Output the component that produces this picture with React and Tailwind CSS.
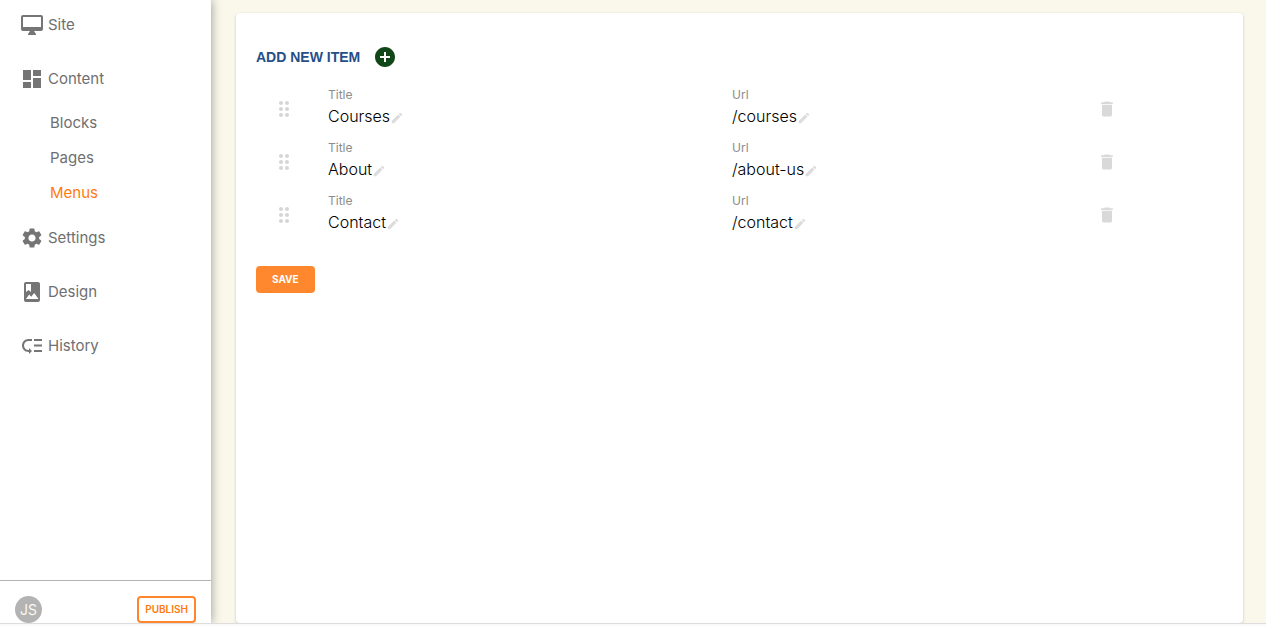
import {
  MdAddCircle,
  MdDashboard,
  MdDelete,
  MdDragIndicator,
  MdEdit,
  MdLowPriority,
  MdSettings,
} from "react-icons/md";

function DesktopIcon(props) {
  return (
    <svg viewBox="0 0 24 24" fill="currentColor" {...props}>
      <path d="M21 2H3c-1.1 0-2 .9-2 2v12c0 1.1.9 2 2 2h7l-2 3v1h8v-1l-2-3h7c1.1 0 2-.9 2-2V4c0-1.1-.9-2-2-2zm0 12H3V4h18v10z" />
    </svg>
  );
}

function AlbumIcon(props) {
  return (
    <svg viewBox="0 0 24 24" fill="currentColor" {...props}>
      <path d="M18 2H6c-1.1 0-2 .9-2 2v16c0 1.1.9 2 2 2h12c1.1 0 2-.9 2-2V4c0-1.1-.9-2-2-2zM6 4h5v8l-2.5-2L6 12V4zm0 15l3.2-4.6 2 2.4 3-3.8L18.500 19H6z" />
    </svg>
  );
}

const navigation = [
  { label: "Site", Icon: DesktopIcon },
  {
    label: "Content",
    Icon: MdDashboard,
    children: ["Blocks", "Pages", "Menus"],
  },
  { label: "Settings", Icon: MdSettings },
  { label: "Design", Icon: AlbumIcon },
  { label: "History", Icon: MdLowPriority },
];

const menuItems = [
  { title: "Courses", url: "/courses" },
  { title: "About", url: "/about-us" },
  { title: "Contact", url: "/contact" },
];

function Sidebar({ current }) {
  return (
    <aside className="relative flex w-[211px] shrink-0 flex-col bg-white shadow-[0_0_10px_rgba(0,0,0,0.4)]">
      <nav aria-label="Main" className="flex-1 text-[15px] leading-6 font-normal">
        <ul className="flex flex-col gap-1">
          {navigation.map(({ label, Icon, children }) => (
            <li key={label}>
              <a href="#" className="flex h-[50px] items-center gap-1 pl-5 text-[#6f6f6f]">
                <Icon className="size-6 text-[#757575]" aria-hidden="true" />
                {label}
              </a>
              {children && (
                <ul className="mt-[5px] mb-[2px] flex flex-col gap-[7px]">
                  {children.map((child) => (
                    <li key={child}>
                      <a
                        href="#"
                        aria-current={child === current ? "page" : undefined}
                        className="flex h-7 items-center pl-[50px] text-[#6f6f6f] aria-[current=page]:text-[#ff7a10]"
                      >
                        {child}
                      </a>
                    </li>
                  ))}
                </ul>
              )}
            </li>
          ))}
        </ul>
      </nav>
      <div className="flex items-center justify-between border-t border-[#b3b3b3] pt-[15px] pr-[15px] pl-[15px]">
        <span className="flex size-[27px] items-center justify-center rounded-full bg-[#b3b3b3] text-sm font-normal text-[#fafaf0]">
          JS
        </span>
        <button
          type="button"
          className="h-[27px] rounded border-2 border-[#ff862d] px-[6px] text-[10px] font-semibold text-[#ff7a10]"
        >
          PUBLISH
        </button>
      </div>
    </aside>
  );
}

function EditableField({ label, value }) {
  return (
    <div>
      <div className="text-xs leading-[18px] font-normal text-[#8c8c8c]">{label}</div>
      <div className="flex items-center text-base leading-[25px] text-black">
        {value}
        <button type="button" aria-label={`Edit ${label} ${value}`} className="mt-[2px]">
          <MdEdit className="size-[14px] text-[#dcdcdc]" />
        </button>
      </div>
    </div>
  );
}

export default function App() {
  return (
    <div className="flex min-h-screen flex-col bg-[#fafafa] font-['Inter',sans-serif] text-base font-light">
      <div className="flex flex-1 overflow-hidden border-b border-[#dddddd] bg-[#faf8eb]">
        <Sidebar current="Menus" />
        <main className="flex flex-1 pt-[13px] pr-[23px] pl-[25px]">
          <section className="flex-1 rounded bg-white px-5 pt-8 shadow-[0_1px_3px_rgba(0,0,0,0.2)]">
            <button
              type="button"
              className="flex items-center gap-[13px] font-['Liberation_Sans',sans-serif] text-sm font-bold text-[#264f87]"
            >
              ADD NEW ITEM
              <MdAddCircle className="size-6 text-[#104618]" aria-hidden="true" />
            </button>
            <ul className="mt-[17px] flex flex-col gap-[10px]">
              {menuItems.map(({ title, url }) => (
                <li key={title} className="grid grid-cols-[72px_404fr_365fr_126fr] items-center">
                  <button type="button" aria-label={`Move ${title}`} className="justify-self-start pt-[2px] pl-4">
                    <MdDragIndicator className="size-6 text-[#d6d6d6]" />
                  </button>
                  <EditableField label="Title" value={title} />
                  <EditableField label="Url" value={url} />
                  <button type="button" aria-label={`Delete ${title}`} className="justify-self-start pt-[2px]">
                    <MdDelete className="size-5 text-[#d9d9d9]" />
                  </button>
                </li>
              ))}
            </ul>
            <button
              type="button"
              className="mt-[31px] h-[27px] rounded bg-[#ff872e] px-4 text-[10px] font-bold text-white"
            >
              SAVE
            </button>
          </section>
        </main>
      </div>
      <div className="h-[2px]" />
    </div>
  );
}
